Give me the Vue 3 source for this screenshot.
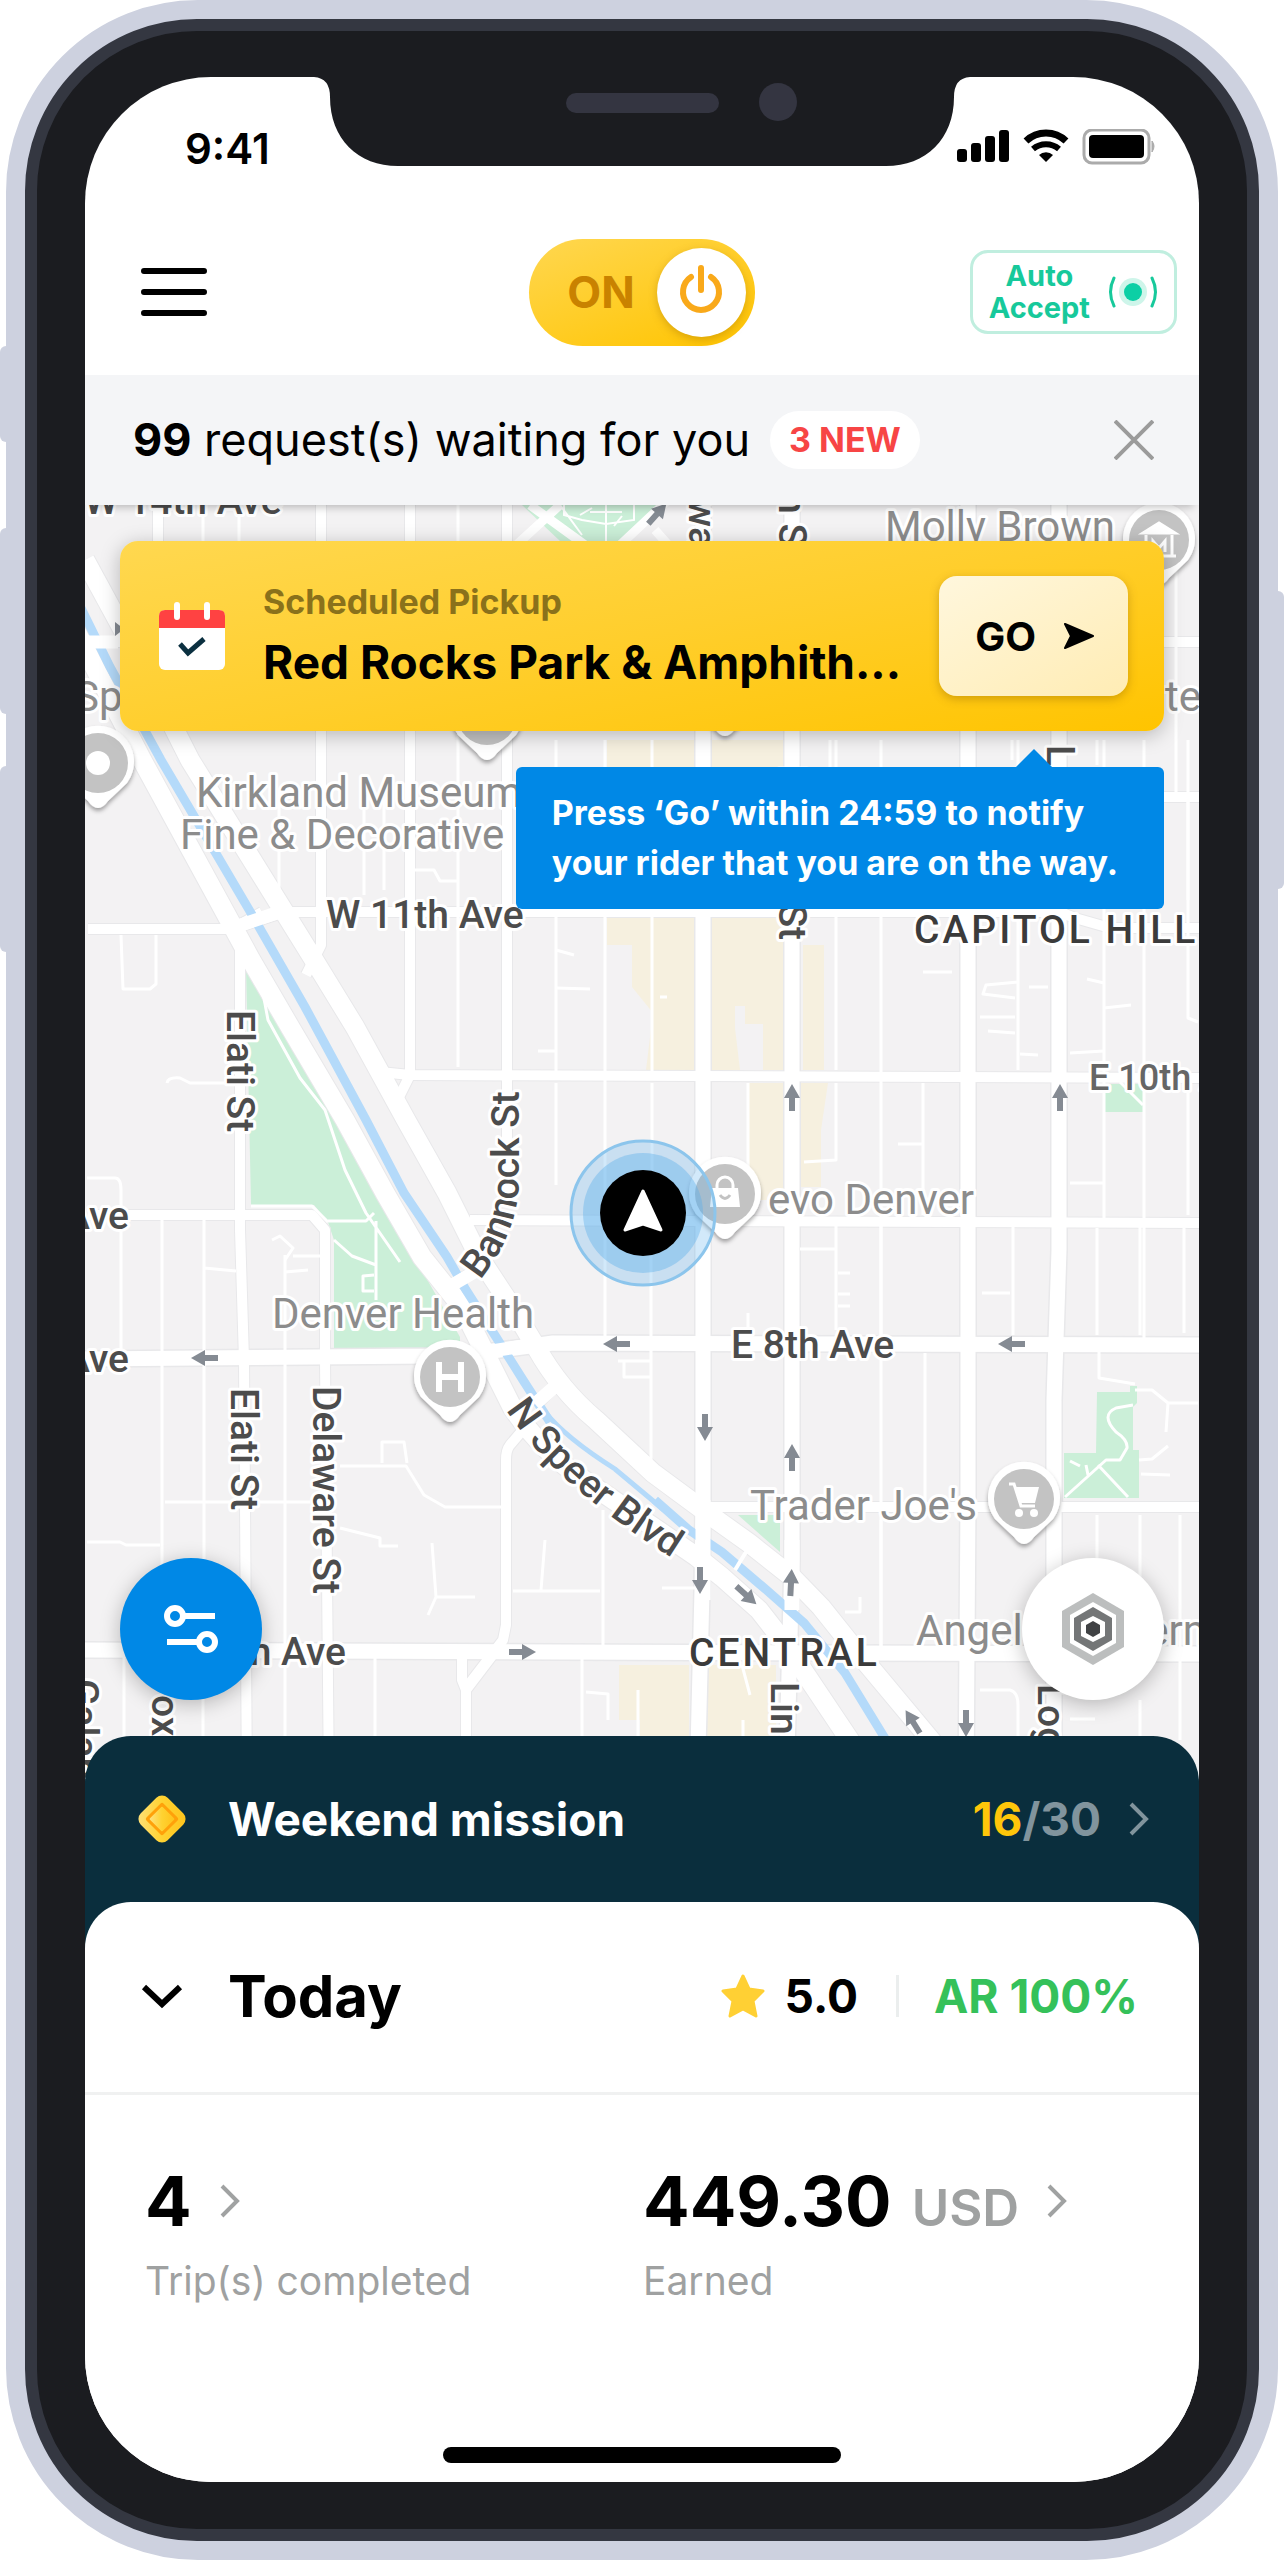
<script setup>
import { ref } from 'vue'

const online = ref(true)

const minorRoads = [
  'M203 505V541M239 505V541M458 505V1067M556 740V1075M605 740V1340M652 740V1075M836 740V1070M881 740V1650',
  'M1018 740V1070M1104 740V1220M1144 740V1070M1188 740V1018L1198 1022M836 1083V1160L804 1162M923 1083V1215',
  'M1144 1080V1340M1188 1090V1215M652 1083V1210M556 1083V1185M748 1083V1215M651 1225V1460M836 1225V1330M881 1225V1345',
  'M1013 1225V1335M1097 1228V1335M1140 1225V1335M1184 1228V1333M1160 505V541M1176 541V797M1188 800V900',
  'M162 1220V1600M204 1220V1600M121 1220V1350M285 1255V1785M87 1178H115Q121 1178 121 1190V1220M204 1268L236 1271',
  'M165 1502H310M87 1542H120L126 1545H160M203 1655V1740M124 1655V1740M375 1655V1740M582 1655V1740M638 1690V1740',
  'M340 1466H406L424 1495L445 1507H506M382 1463V1442H404L407 1463M340 1528L380 1538V1546H398M432 1543L436 1597L428 1615M436 1597H475',
  'M545 1540L541 1590M513 1591H600M603 1510V1645M624 1361V1377H650M618 1361H650M121 935L123 989H150L156 984V935',
  'M167 1083Q168 1077 180 1078L190 1083H225M279 790V900M364 790V895M384 790V890M411 870H434L440 881H458',
  'M556 950L574 955M556 988L590 989M538 1051H556M660 997H667M923 972H952M980 1017H1015M988 1031L1015 1033M1029 987H1048M1018 982L986 985L983 994L1015 998',
  'M1087 979L1104 983M1104 1008L1131 1005M1070 1053L1104 1051M1020 1054L1038 1055M898 1144H923M1070 1183H1104M800 1249H836M838 1273H850M838 1294H850M838 1306H850',
  'M982 1293H1010M1099 1345V1378L1135 1384M1135 1390L1152 1390L1168 1403H1198M1168 1403L1166 1432M1139 1460L1152 1459L1168 1446M1141 1474L1170 1475',
  'M1097 1515V1650M1140 1515V1590M1180 1515V1650M881 1520V1650M860 1597V1612H845M662 1588H700M925 1353V1500M748 1313V1330M742 1665L750 1695M743 1720V1740',
  'M980 1690H1010Q1018 1692 1018 1705V1740M1140 1700V1740M1180 1660V1740M1070 1719H1095M586 1692L608 1694V1720M830 740V790M1012 740V760M1060 740V760M1097 740V765',
  'M251 1206H312L328 1222M272 1240L280 1236L293 1248L285 1260M293 1256H325M285 1272L308 1270M263 993L268 1020L300 1078L325 1110L345 1170L366 1213L400 1262M328 1221H366L374 1213M376 1221V1300M334 1240L352 1256L376 1265M374 1275L363 1276V1291H374'
]

const mediumRoads = [
  'M158 505V541M321 505V945L306 975M410 505V1075L395 1105M507 505V1200M240 935V1230L244 1360L247 1790M325 1235V1360L329 1790',
  'M88 642H125M88 929H232L262 912M245 925L285 912H1060L1075 918L1110 928H1200M1150 642H1200M1150 797H1200M380 1072L410 1075L1200 1078',
  'M88 1215H312L325 1230V1260M470 1220L1200 1223M710 1507H1200M527 1425L510 1445Q506 1450 506 1460V1625L503 1640L466 1688V1790M462 1655V1680L466 1690',
  'M466 1690L495 1652M560 1380L540 1402M462 1278L490 1262'
]

const wideRoads = [
  'M703 505V1510L702 1590L697 1790M792 505V1560L786 1790M968 505V1500L966 1790M1059 505V1250L1054 1400V1790',
  'M80 1359L430 1356L485 1352L553 1343L1200 1345M80 1650L560 1652L1200 1654'
]

const blvdLeft = 'M60 600L142 760L251 960L290 1027L345 1120L385 1193L422 1257L462 1307L481 1345L512 1407Q540 1450 584 1480L640 1518L697 1557L722 1577L759 1610L784 1642L853 1745'
const blvdRight = 'M85 560L142 665L190 760L314 960L355 1027L406 1120L447 1193L479 1257L512 1307L536 1347Q560 1390 596 1420L653 1473L714 1518L749 1543L792 1577L821 1607L849 1642L935 1745'

const arrows = [
  [792, 1098, 0], [1060, 1098, 0], [205, 1358, 270], [617, 1344, 270], [1012, 1344, 270], [705, 1427, 180],
  [792, 1458, 0], [700, 1580, 180], [791, 1583, 3], [746, 1595, 132], [522, 1652, 90], [913, 1722, 328],
  [966, 1723, 180], [657, 514, 42]
]

const pins = [
  { x: 725, y: 1194, kind: 'bag' }, { x: 450, y: 1377, kind: 'hospital' }, { x: 1024, y: 1499, kind: 'cart' },
  { x: 1159, y: 540, kind: 'museum' }, { x: 98, y: 763, kind: 'dot' }, { x: 487, y: 715, kind: 'dot' }, { x: 725, y: 691, kind: 'dot' }
]

const places = [
  [885, 541, 'Molly Brown'], [196, 807, 'Kirkland Museum'], [180, 849, 'Fine & Decorative'], [74, 711, 'Sp'],
  [1165, 711, 'te'], [768, 1214, 'evo Denver'], [272, 1328, 'Denver Health'], [750, 1520, "Trader Joe's"], [916, 1645, "Angelo's Tavern"]
]

const streets = [
  { x: 84, y: 514, t: 'W 14th Ave' }, { x: 326, y: 928, t: 'W 11th Ave' }, { x: 731, y: 1358, t: 'E 8th Ave' },
  { x: 129, y: 1229, t: 'W 9th Ave', end: true }, { x: 129, y: 1372, t: 'W 8th Ave', end: true },
  { x: 346, y: 1665, t: 'W 7th Ave', end: true }, { x: 1089, y: 1090, t: 'E 10th Ave', soft: true }
]

const sideStreets = [
  { x: 227, y: 1010, t: 'Elati St' }, { x: 231, y: 1388, t: 'Elati St' }, { x: 313, y: 1386, t: 'Delaware St' },
  { x: 689, y: 548, t: 'Broadwa', end: true }, { x: 779, y: 560, t: 'Lincoln St', end: true }, { x: 779, y: 940, t: 'Lincoln St', end: true },
  { x: 1047, y: 745, t: 'Logan St' }, { x: 771, y: 1682, t: 'Lin' }, { x: 1038, y: 1684, t: 'Logan St' },
  { x: 71, y: 1679, t: 'Galapago St' }, { x: 152, y: 1674, t: 'Fox St' }
]
</script>

<template>
  <main class="page">
    <div class="phone">
      <i class="key key-mute"></i><i class="key key-up"></i><i class="key key-down"></i><i class="key key-power"></i>
      <div class="bezel">
        <div class="screen">
          <svg class="notch" viewBox="0 0 656 90" aria-hidden="true">
            <path d="M0 0H656Q640 1 640 20C640 62 612 89 572 89H84C44 89 16 62 16 20Q16 1 0 0Z" fill="#1b1c20" />
            <rect x="252" y="16" width="153" height="20" rx="10" fill="#343541" />
            <circle cx="464" cy="25" r="19" fill="#343541" />
          </svg>

          <div class="status">
            <time>9:41</time>
            <svg width="200" height="36" viewBox="0 0 200 36" aria-hidden="true">
              <rect x="0" y="20" width="10" height="13" rx="3" /><rect x="14" y="14" width="10" height="19" rx="3" />
              <rect x="28" y="7" width="10" height="26" rx="3" /><rect x="42" y="1" width="10" height="32" rx="3" />
              <path d="M69 12A29 29 0 0 1 109 12" fill="none" stroke="#000" stroke-width="7" />
              <path d="M76 20A20 20 0 0 1 102 20" fill="none" stroke="#000" stroke-width="6" />
              <path d="M82 26A10 10 0 0 1 96 26L89 33Z" />
              <rect x="127" y="1" width="65" height="33" rx="8" fill="none" stroke="#ababab" stroke-width="3" />
              <rect x="132" y="6" width="55" height="23" rx="4" />
              <path d="M195 12Q199 17 195 23Z" fill="#ababab" stroke="#ababab" stroke-width="1" />
            </svg>
          </div>

          <header class="topbar">
            <button class="icon-button" type="button" aria-label="Menu">
              <svg width="66" height="50" viewBox="0 0 66 50"><path d="M3 4H63M3 25H63M3 46H63" stroke="#000" stroke-width="6" stroke-linecap="round" /></svg>
            </button>
            <label class="switch">
              <input v-model="online" type="checkbox" role="switch" aria-label="Online" />
              <span class="switch-text">{{ online ? 'ON' : 'OFF' }}</span>
              <span class="knob">
                <svg width="46" height="56" viewBox="0 0 46 56"><path d="M23 4V26M13 13A18 18 0 1 0 33 13" fill="none" stroke="#f9a91a" stroke-width="6" stroke-linecap="round" /></svg>
              </span>
            </label>
            <div class="topbar-end">
              <button class="auto" type="button">
                <span>Auto<br />Accept</span>
                <svg width="50" height="36" viewBox="0 0 50 36">
                  <circle cx="25" cy="18" r="14" fill="#cef5ea" /><circle cx="25" cy="18" r="9" fill="#0ccfa5" />
                  <path d="M6 4Q-1 18 6 32M44 4Q51 18 44 32" fill="none" stroke="#17c99b" stroke-width="3" stroke-linecap="round" />
                </svg>
              </button>
            </div>
          </header>

          <section class="requests">
            <p><b>99</b> request(s) waiting for you</p>
            <strong class="pill">3 NEW</strong>
            <button class="icon-button close" type="button" aria-label="Dismiss">
              <svg width="40" height="40" viewBox="0 0 40 40"><path d="M1 1L39 39M39 1L1 39" stroke="#9b9b9b" stroke-width="4" /></svg>
            </button>
          </section>

          <section class="map-area">
            <svg class="map" viewBox="85 505 1114 1277" role="img" aria-label="Map of Denver">
              <defs>
                <path id="bannock" d="M480 1280Q519 1232 519 1178V1040" />
                <path id="speer" d="M506 1410Q560 1493 700 1575" />
                <filter id="pinShadow" x="-30%" y="-30%" width="160%" height="160%"><feDropShadow dx="0" dy="3" stdDeviation="2" flood-opacity=".35" /></filter>
              </defs>
              <rect x="85" y="505" width="1114" height="1277" fill="#f3f2f3" />
              <g fill="#f6f0df">
                <path d="M607 740H695V1070H646L653 1013L632 987V945H607ZM711 740H785V1070H763V1024H745V1006H735V1028L740 1070H711ZM803 945H824V1070H803Z" />
                <path d="M749 1083H785V1200H749ZM800 1083H828L821 1130V1187H800ZM619 1665H689V1785H640V1720H619ZM708 1665H776V1785H706Z" />
              </g>
              <g fill="#cbefd8">
                <path d="M246 967L263 993L320 1087L378 1183L416 1260L460 1337V1349H334V1240L328 1222L314 1205H251Z" />
                <path d="M522 505H665L626 541H560Z" />
                <path d="M1097 1392H1130V1386H1137V1403L1133 1407V1450H1139V1498H1064V1453H1096ZM738 1515H780V1552ZM1104 1084H1143V1112H1104Z" />
              </g>
              <path d="M564 505V515L582 520L606 524L634 520V505M580 515L592 508M606 505V541M590 512H622M622 516L614 526M560 505L582 535" fill="none" stroke="#fff" stroke-width="2" />
              <g fill="none" stroke="#e8e8ea">
                <path v-for="d in mediumRoads" :key="d" :d="d" stroke-width="12" />
                <path v-for="d in wideRoads" :key="d" :d="d" stroke-width="18" />
                <path :d="blvdLeft" stroke-width="21" /><path :d="blvdRight" stroke-width="21" />
              </g>
              <g fill="none" stroke="#fff" stroke-linejoin="round">
                <path v-for="d in minorRoads" :key="d" :d="d" stroke-width="3" />
                <path v-for="d in mediumRoads" :key="d" :d="d" stroke-width="10" />
                <path v-for="d in wideRoads" :key="d" :d="d" stroke-width="15" />
                <path d="M500 560L560 505M530 505L585 545M620 545L668 500M655 530L695 575" stroke-width="9" />
                <path :d="blvdLeft" stroke-width="19" /><path :d="blvdRight" stroke-width="19" />
                <path d="M1120 1082L1143 1105M1065 1497L1106 1460H1120L1127 1448Q1128 1440 1116 1432Q1100 1415 1116 1408L1133 1405M1098 1465L1128 1497M1070 1461L1080 1466M1086 1465L1088 1475" stroke-width="3" />
              </g>
              <g fill="none" stroke="#b4dafa">
                <path d="M80 606L110 667L161 760L251 913L305 1007L366 1120L404 1193L447 1257L466 1290L496 1337L523 1380L550 1422" stroke-width="9" />
                <path d="M545 1412Q566 1438 615 1469L664 1510" stroke-width="5" />
                <path d="M655 1500L689 1530L722 1552L763 1587L804 1623L845 1673L886 1740" stroke-width="9" />
              </g>
              <g fill="none" stroke="#fff">
                <path d="M82 642H118M235 927L285 910M447 1288L478 1270M485 1352L530 1345M535 1404L560 1382" stroke-width="13" />
                <path d="M703 1500V1600M792 1540V1610" stroke-width="15" />
                <path d="M735 1570L746 1552" stroke-width="4" />
              </g>

              <g fill="#858b93">
                <path v-for="(a, i) in arrows" :key="i" d="M0 -14L8 0H3V13H-3V0H-8Z" :transform="`translate(${a[0]} ${a[1]}) rotate(${a[2]})`" />
                <path d="M115 622L124 629L115 636Z" />
              </g>

              <g v-for="(p, i) in pins" :key="'p' + i" :transform="`translate(${p.x} ${p.y})`">
                <path d="M0 45Q-5 45 -10 38L-29 20A36 36 0 1 1 29 20L10 38Q5 45 0 45Z" fill="#fff" filter="url(#pinShadow)" />
                <circle r="30" fill="#c3c3c3" />
                <g v-if="p.kind === 'bag'">
                  <path d="M-13 -6H13L15 13H-15Z" fill="#fff" />
                  <path d="M-8 -6V-9A8 8 0 0 1 8 -9V-6" fill="none" stroke="#fff" stroke-width="3" />
                  <path d="M-5 1Q0 8 5 1" fill="none" stroke="#c3c3c3" stroke-width="3" />
                </g>
                <path v-else-if="p.kind === 'hospital'" d="M-11 -15V15M11 -15V15M-11 0H11" stroke="#fff" stroke-width="6" fill="none" />
                <g v-else-if="p.kind === 'cart'">
                  <path d="M-9 -12H15L11 4H-4Z" fill="#fff" />
                  <path d="M-15 -15H-10L-3 7H11" fill="none" stroke="#fff" stroke-width="3" />
                  <circle cx="-5" cy="14" r="4" fill="#fff" /><circle cx="10" cy="14" r="4" fill="#fff" />
                </g>
                <g v-else-if="p.kind === 'museum'" fill="none" stroke="#fff" stroke-width="3">
                  <path d="M-16 -7L0 -17L16 -7Z" fill="#fff" /><path d="M-13 -5V15M13 -5V15M-17 16H17M-6 12V1L0 8L6 1V12" />
                </g>
                <circle v-else r="12" fill="#fff" />
              </g>

              <g class="label place">
                <text v-for="p in places" :key="p[2]" :x="p[0]" :y="p[1]">{{ p[2] }}</text>
              </g>
              <g class="label">
                <text v-for="s in streets" :key="s.t" :x="s.x" :y="s.y" :class="{ soft: s.soft }" :text-anchor="s.end ? 'end' : 'start'">{{ s.t }}</text>
                <text v-for="(s, i) in sideStreets" :key="i" :transform="`translate(${s.x} ${s.y}) rotate(90)`" :text-anchor="s.end ? 'end' : 'start'">{{ s.t }}</text>
                <text><textPath href="#bannock">Bannock St</textPath></text>
                <text><textPath href="#speer">N Speer Blvd</textPath></text>
                <text class="district" x="914" y="943">CAPITOL HILL</text>
                <text class="district" x="689" y="1666">CENTRAL</text>
              </g>

              <g transform="translate(643 1213)">
                <circle r="72" fill="#4aa9ec" fill-opacity=".25" stroke="#8cc5ec" stroke-width="3" />
                <circle r="60" fill="#5cb0ec" fill-opacity=".4" />
                <circle r="43" />
                <path d="M0 -22L18 17L0 11L-18 17Z" fill="#fff" stroke="#fff" stroke-width="3" stroke-linejoin="round" />
              </g>
            </svg>

            <div class="overlay">
              <article class="pickup">
                <svg width="66" height="68" viewBox="0 0 66 68" aria-hidden="true">
                  <rect y="8" width="66" height="60" rx="6" fill="#fff" />
                  <path d="M0 26V14Q0 8 6 8H60Q66 8 66 14V26Z" fill="#ff4242" />
                  <path d="M18 3V15M48 3V15" stroke="#fff" stroke-width="6" stroke-linecap="round" />
                  <path d="M21 42L29 51L45 37" fill="none" stroke="#0b3040" stroke-width="5" />
                </svg>
                <div class="pickup-text">
                  <p class="pickup-kind">Scheduled Pickup</p>
                  <h2>Red Rocks Park &amp; Amphith...</h2>
                </div>
                <button class="go" type="button">
                  GO
                  <svg width="30" height="28" viewBox="0 0 30 28"><path d="M1 2L29 14L1 26L7 14Z" stroke="#000" stroke-width="2" stroke-linejoin="round" /></svg>
                </button>
              </article>

              <p class="tip">Press ‘Go’ within 24:59 to notify<br />your rider that you are on the way.</p>

              <div class="fabs">
                <button class="fab fab-blue" type="button" aria-label="Filters">
                  <svg width="56" height="50" viewBox="0 0 56 50" fill="none" stroke="#fff" stroke-width="6"><circle cx="12" cy="12" r="8" /><path d="M20 12H52M4 38H36" /><circle cx="44" cy="38" r="8" /></svg>
                </button>
                <button class="fab" type="button" aria-label="Hot zones">
                  <svg width="64" height="72" viewBox="0 0 64 72"><path d="M32 0L63 18V54L32 72L1 54V18Z" fill="#bcbebe" /><path d="M32 9L55 22V50L32 63L9 50V22Z" fill="#fff" /><path d="M32 14L51 25V47L32 58L13 47V25Z" fill="#747677" /><path d="M32 23L44 29V43L32 49L20 43V29Z" fill="#fff" /><path d="M32 28L39 32V40L32 44L25 40V32Z" fill="#404244" /></svg>
                </button>
              </div>
            </div>
          </section>

          <a class="mission" href="#mission">
            <svg width="48" height="48" viewBox="0 0 48 48" aria-hidden="true">
              <defs><linearGradient id="coin" x1="0" y1="1" x2="1" y2="0"><stop offset="0" stop-color="#ffe27e" /><stop offset=".5" stop-color="#ffd231" /><stop offset="1" stop-color="#ffc21a" /></linearGradient></defs>
              <rect x="5" y="5" width="38" height="38" rx="8" transform="rotate(45 24 24)" fill="url(#coin)" />
              <rect x="12" y="12" width="24" height="24" rx="2" transform="rotate(45 24 24)" fill="#ffa10a" />
              <rect x="15" y="15" width="18" height="18" rx="1" transform="rotate(45 24 24)" fill="url(#coin)" />
            </svg>
            <b>Weekend mission</b>
            <span class="count"><em>16</em>/30</span>
            <svg width="20" height="34" viewBox="0 0 20 34"><path d="M2 2L17 17L2 32" fill="none" stroke="#81949d" stroke-width="4" /></svg>
          </a>

          <section class="sheet">
            <header class="today">
              <button class="icon-button" type="button" aria-label="Collapse">
                <svg width="48" height="48" viewBox="0 0 48 48"><path d="M6 15L24 32L42 15" fill="none" stroke="#000" stroke-width="6" /></svg>
              </button>
              <h1>Today</h1>
              <span class="rating">
                <svg width="44" height="44" viewBox="0 0 44 44" aria-hidden="true"><path d="M22 2L28 15L42 17L32 27L35 42L22 35L9 42L12 27L2 17L16 15Z" fill="#ffd034" stroke="#ffd034" stroke-width="3" stroke-linejoin="round" /></svg>
                5.0
              </span>
              <span class="accept">AR 100%</span>
            </header>
            <div class="stats">
              <a href="#trips">
                <span class="value">4 <svg width="20" height="34" viewBox="0 0 20 34"><path d="M2 2L17 17L2 32" fill="none" stroke="#a0a2a2" stroke-width="4" /></svg></span>
                <span class="caption">Trip(s) completed</span>
              </a>
              <a href="#earnings">
                <span class="value">449.30 <small>USD</small> <svg width="20" height="34" viewBox="0 0 20 34"><path d="M2 2L17 17L2 32" fill="none" stroke="#a0a2a2" stroke-width="4" /></svg></span>
                <span class="caption">Earned</span>
              </a>
            </div>
            <div class="home"></div>
          </section>
        </div>
      </div>
    </div>
  </main>
</template>

<style>
body {
  margin: 0;
  background: #fff;
}
</style>

<style scoped>
.page {
  padding: 0 6px;
  font-family: Inter, "Liberation Sans", sans-serif;
  color: #000;
}
.page * {
  box-sizing: border-box;
}
p, h1, h2 {
  margin: 0;
}
a {
  color: inherit;
  text-decoration: none;
}
button {
  font: inherit;
  color: inherit;
  border: 0;
  padding: 0;
  cursor: pointer;
}
svg {
  display: block;
  flex: none;
}
.phone {
  position: relative;
  border: 19px solid #cdd1df;
  border-radius: 192px;
  background: #cdd1df;
}
.bezel {
  padding: 46px 48px 47px;
  border: 12px solid #343741;
  border-radius: 172px;
  background: #1b1c20;
}
.screen {
  position: relative;
  display: flex;
  flex-direction: column;
  overflow: hidden;
  border-radius: 126px;
  background: #fff;
}
.key {
  position: absolute;
  left: -25px;
  width: 7px;
  border-radius: 6px 0 0 6px;
  background: #cdd1df;
}
.key-mute { top: 327px; height: 96px; }
.key-up { top: 509px; height: 186px; }
.key-down { top: 747px; height: 186px; }
.key-power {
  top: 572px;
  right: -25px;
  left: auto;
  height: 298px;
  border-radius: 0 6px 6px 0;
}
.notch {
  position: absolute;
  top: 0;
  left: 50%;
  width: 656px;
  margin-left: -328px;
}
.status {
  display: flex;
  align-items: center;
  justify-content: space-between;
  height: 132px;
  padding: 8px 42px 0 100px;
}
.status time {
  padding-top: 4px;
  font-size: 42px;
  line-height: 48px;
  font-weight: 600;
}
.topbar {
  display: grid;
  grid-template-columns: 1fr auto 1fr;
  align-items: center;
  height: 166px;
  padding: 0 22px 0 56px;
}
.topbar .switch {
  margin-right: 34px;
}
.icon-button {
  justify-self: start;
  background: none;
}
.switch {
  display: flex;
  align-items: center;
  gap: 22px;
  padding: 9px 9px 9px 38px;
  border-radius: 54px;
  background: linear-gradient(160deg, #ffd750, #ffc400);
}
.switch input {
  position: absolute;
  opacity: 0;
}
.switch-text {
  font-size: 44px;
  line-height: 52px;
  font-weight: 700;
  color: #c98200;
}
.knob {
  display: flex;
  align-items: center;
  justify-content: center;
  width: 89px;
  height: 89px;
  border-radius: 50%;
  background: #fff;
  box-shadow: 0 3px 8px rgba(150, 100, 0, .35);
}
.topbar-end {
  display: flex;
  justify-content: flex-end;
}
.auto {
  display: flex;
  align-items: center;
  gap: 18px;
  height: 84px;
  padding: 0 16px;
  border: 3px solid #c0eedf;
  border-radius: 18px;
  background: #fff;
  color: #17c99b;
  font-size: 29px;
  line-height: 32px;
  font-weight: 700;
}
.requests {
  position: relative;
  z-index: 1;
  display: flex;
  align-items: center;
  gap: 20px;
  height: 130px;
  padding: 0 45px 0 48px;
  background: #f4f5f7;
  box-shadow: 0 8px 8px -6px rgba(0, 0, 0, .25);
  font-size: 45px;
  line-height: 56px;
}
.requests b {
  font-weight: 700;
}
.pill {
  padding: 0 19px;
  border-radius: 30px;
  background: #fff;
  color: #f74545;
  font-size: 34px;
  line-height: 58px;
  font-weight: 700;
}
.close {
  margin-left: auto;
}
.map-area {
  display: grid;
}
.map,
.overlay {
  grid-area: 1 / 1;
}
.map {
  width: 100%;
  height: auto;
}
.label {
  font-family: Roboto, "Liberation Sans", sans-serif;
  font-size: 39px;
  font-weight: 500;
  fill: #4c4c4c;
  stroke: #fff;
  stroke-width: 6px;
  stroke-linejoin: round;
  paint-order: stroke;
}
.label .soft {
  fill: #666;
  font-size: 36px;
}
.place {
  font-size: 42px;
  font-weight: 400;
  fill: #8c8c8c;
}
.district {
  fill: #3b3b3b;
  letter-spacing: 3px;
}
.overlay {
  display: flex;
  flex-direction: column;
  align-items: flex-end;
  gap: 36px;
  padding: 36px 35px 82px;
}
.pickup {
  display: flex;
  align-items: center;
  align-self: stretch;
  height: 190px;
  padding: 0 36px 0 39px;
  border-radius: 18px;
  background: linear-gradient(168deg, #ffd850, #ffce2c 50%, #ffc400);
  box-shadow: 0 4px 20px rgba(0, 0, 0, .25);
}
.pickup-text {
  flex: 1;
  min-width: 0;
  margin-left: 38px;
  padding-bottom: 4px;
}
.pickup-kind {
  color: #8a711b;
  font-size: 34px;
  line-height: 56px;
  font-weight: 700;
}
.pickup h2 {
  font-size: 46px;
  line-height: 64px;
  font-weight: 700;
  white-space: nowrap;
}
.go {
  display: flex;
  align-items: center;
  gap: 28px;
  height: 120px;
  padding: 0 34px 0 36px;
  border-radius: 18px;
  background: linear-gradient(150deg, #fff7dd, #ffecb4);
  box-shadow: 0 3px 10px rgba(120, 80, 0, .35);
  font-size: 40px;
  font-weight: 700;
}
.tip {
  position: relative;
  padding: 21px 46px 21px 36px;
  border-radius: 6px;
  background: #0088e6;
  color: #fff;
  font-size: 34px;
  line-height: 50px;
  font-weight: 700;
}
.tip::before {
  content: "";
  position: absolute;
  right: 112px;
  bottom: 100%;
  border: 18px solid transparent;
  border-top: 0;
  border-bottom-color: #0088e6;
}
.fabs {
  display: flex;
  justify-content: space-between;
  align-self: stretch;
  margin-top: auto;
}
.fab {
  display: flex;
  align-items: center;
  justify-content: center;
  width: 142px;
  height: 142px;
  border-radius: 50%;
  background: #fff;
  box-shadow: 0 4px 20px rgba(0, 0, 0, .25);
}
.fab-blue {
  background: #0088e6;
}
.mission {
  position: relative;
  display: flex;
  align-items: center;
  height: 212px;
  margin-top: -46px;
  padding: 0 50px 46px 53px;
  border-radius: 46px 46px 0 0;
  background: #0a2e3d;
  color: #fff;
  font-size: 46px;
  line-height: 56px;
}
.mission b {
  margin-left: 42px;
  font-weight: 700;
}
.count {
  margin: 0 28px 0 auto;
  color: #81949d;
  font-weight: 700;
}
.count em {
  color: #ffc60a;
  font-style: normal;
}
.sheet {
  position: relative;
  display: flex;
  flex-direction: column;
  min-height: 580px;
  margin-top: -46px;
  border-radius: 46px 46px 0 0;
  background: #fff;
}
.today {
  display: flex;
  align-items: center;
  height: 193px;
  padding: 0 61px 2px 53px;
  border-bottom: 3px solid #f0f1f1;
  font-size: 46px;
  line-height: 56px;
  font-weight: 700;
}
.today h1 {
  margin-left: 42px;
  font-size: 58px;
  line-height: 68px;
  font-weight: 700;
}
.rating {
  display: flex;
  align-items: center;
  gap: 20px;
  margin-left: auto;
}
.accept {
  margin-left: 38px;
  padding-left: 38px;
  color: #35c15a;
  background: linear-gradient(#ebeeee, #ebeeee) left center / 3px 42px no-repeat;
}
.stats {
  display: grid;
  grid-template-columns: 498px 1fr;
  padding: 64px 60px 0;
}
.stats a {
  display: flex;
  flex-direction: column;
}
.value {
  display: flex;
  align-items: baseline;
  gap: 20px;
  height: 84px;
  font-size: 69px;
  line-height: 84px;
  font-weight: 700;
}
.value svg {
  margin: 25px 0 0 8px;
  align-self: flex-start;
}
.value small {
  color: #9fa1a1;
  font-size: 51px;
  font-weight: 600;
}
.caption {
  margin-top: 8px;
  color: #9fa1a1;
  font-size: 39px;
  line-height: 60px;
}
.home {
  width: 398px;
  height: 16px;
  margin: auto auto 19px;
  border-radius: 8px;
  background: #000;
}
</style>
